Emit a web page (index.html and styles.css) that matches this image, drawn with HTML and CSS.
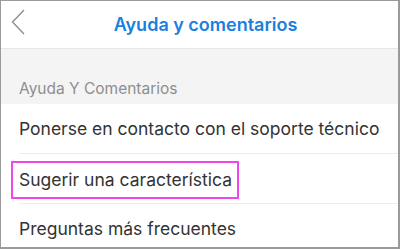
FILE: index.html
```html
<!DOCTYPE html>
<html lang="es">
<head>
    <meta charset="UTF-8">
    <meta name="viewport" content="width=device-width, initial-scale=1.0">
    <title>Ayuda y comentarios</title>
    <link rel="stylesheet" href="styles.css">
</head>
<body>
    <div class="screen">
        <div class="nav-bar">
            <button class="back-button" aria-label="Atrás">
                <svg width="14" height="26" viewBox="0 0 14 26">
                    <path d="M13 1 L1.5 13 L13 25" fill="none" stroke="#8a8a8a" stroke-width="1.3"/>
                </svg>
            </button>
            <h1 class="nav-title">Ayuda y comentarios</h1>
        </div>

        <div class="section-header">Ayuda Y Comentarios</div>

        <!-- Help options -->
        <ul class="option-list">
            <li class="option">Ponerse en contacto con el soporte técnico</li>
            <li class="option"><span class="highlight">Sugerir una característica</span></li>
            <li class="option">Preguntas más frecuentes</li>
        </ul>
    </div>
</body>
</html>
```

FILE: styles.css
```css
html, body {
    margin: 0;
    padding: 0;
}
body {
    background-color: #ffffff;
    font-family: Inter, "Liberation Sans", Arial, sans-serif;
}
.screen {
    box-sizing: border-box;
    width: 400px;
    height: 249px;
    border: 1px solid #9a9a9a;
    border-right-width: 2px;
    border-bottom-width: 2px;
    overflow: hidden;
    background-color: #ffffff;
}
.nav-bar {
    position: relative;
    height: 47px;
    display: flex;
    align-items: center;
    justify-content: center;
    border-bottom: 1px solid #e6e6e6;
}
.back-button {
    position: absolute;
    left: 10px;
    top: 8px;
    background: none;
    border: none;
    padding: 0;
    cursor: pointer;
}
.nav-title {
    margin: 0 0 0 12px;
    font-size: 18px;
    font-weight: 600;
    color: #1a7fe0;
}
.section-header {
    height: 55px;
    box-sizing: border-box;
    padding: 30px 0 0 18px;
    background-color: #f4f4f4;
    color: #8e8e8e;
    font-size: 15.5px;
}
.option-list {
    list-style: none;
    margin: 0;
    padding: 0 0 0 18px;
}
.option {
    height: 49px;
    display: flex;
    align-items: center;
    border-bottom: 1px solid #ececec;
    color: #333333;
    font-size: 17.5px;
}
.highlight {
    display: inline-block;
    margin: 3px 0 0 -8px;
    padding: 6px 5px 7px 6px;
    border: 2px solid #f046ee;
}
```
